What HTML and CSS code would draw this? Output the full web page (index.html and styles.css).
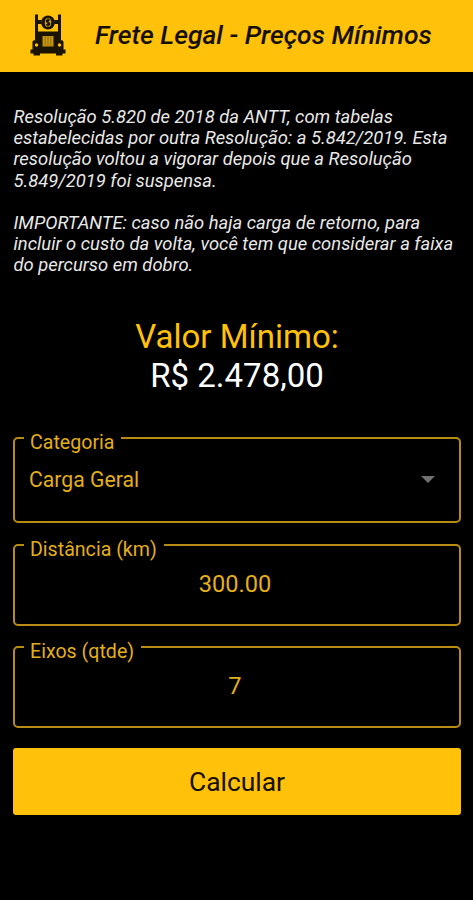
FILE: index.html
```html
<!DOCTYPE html>
<html lang="pt-BR">
<head>
  <meta charset="UTF-8">
  <meta name="viewport" content="width=device-width, initial-scale=1.0">
  <title>Frete Legal - Preços Mínimos</title>
  <link rel="stylesheet" href="styles.css">
</head>
<body>
  <header>
    <svg class="logo" viewBox="0 0 36 42" width="36" height="42">
      <!-- exhaust pipes and cab -->
      <path d="M5 .5h3v26H5zM28 .5h3v26h-3z"/>
      <path d="M8 6h3.500v4H8zM24.500 6H28v4h-3.500z"/>
      <path d="M7 17.500h22V21H7z"/>
      <circle cx="18" cy="8.500" r="6.900"/>
      <ellipse class="coin" cx="18" cy="8.500" rx="3.200" ry="4.600"/>
      <path class="sign" d="M19.600 6.500c-.8-1-3.200-.8-3.200.6 0 1.700 3.300 1 3.300 2.900 0 1.500-2.700 1.500-3.500.4M18 4.500v8"/>
      <!-- bonnet, bumper and wheels -->
      <path d="M2.500 28q0-1.800 1.800-1.800h2.200L7.500 20.500h21l1 5.700h2.200q1.800 0 1.800 1.800v8h-31z"/>
      <path d="M.5 35.500h35v4H.5zM3.500 38.500H10v3H3.500zM26 38.500h6.500v3H26z"/>
      <path class="grille" d="M12.500 22h11v10.500h-11z"/>
      <path class="bars" d="M15.200 22v10.500M18 22v10.500M20.800 22v10.500"/>
      <circle class="lamp" cx="6.500" cy="31" r="1.700"/>
      <circle class="lamp" cx="29.500" cy="31" r="1.700"/>
    </svg>
    <h1>Frete Legal - Preços Mínimos</h1>
  </header>

  <main>
    <div class="notice">
      <p>Resolução 5.820 de 2018 da ANTT, com tabelas<br>
      estabelecidas por outra Resolução: a 5.842/2019. Esta<br>
      resolução voltou a vigorar depois que a Resolução<br>
      5.849/2019 foi suspensa.</p>
      <p>IMPORTANTE: caso não haja carga de retorno, para<br>
      incluir o custo da volta, você tem que considerar a faixa<br>
      do percurso em dobro.</p>
    </div>

    <div class="result">
      <div class="result-label">Valor Mínimo:</div>
      <div class="result-value">R$ 2.478,00</div>
    </div>

    <form>
      <fieldset class="field category">
        <legend>Categoria</legend>
        <div class="select">
          <span>Carga Geral</span>
          <svg class="arrow" viewBox="0 0 14 7" width="14" height="7"><path d="M0 0h14L7 7z"/></svg>
        </div>
      </fieldset>
      <fieldset class="field">
        <legend>Distância (km)</legend>
        <input type="text" value="300.00">
      </fieldset>
      <fieldset class="field">
        <legend>Eixos (qtde)</legend>
        <input type="text" value="7">
      </fieldset>
      <button type="button" class="submit">Calcular</button>
    </form>
  </main>
</body>
</html>
```

FILE: styles.css
```css
* {
  box-sizing: border-box;
}
body {
  margin: 0;
  min-height: 100vh;
  font-family: Roboto, sans-serif;
  background: #000;
  color: #fff;
}
header {
  display: flex;
  align-items: center;
  height: 72px;
  padding: 0 30px 2px;
  background: #ffc109;
  color: #151000;
}
.logo {
  flex: none;
  fill: #191300;
}
.logo .coin {
  fill: #d9a50d;
}
.logo .sign {
  fill: none;
  stroke: #191300;
  stroke-width: 1.5;
}
.logo .grille {
  fill: #c39512;
}
.logo .bars {
  stroke: #8d6c0d;
  stroke-width: 0.7;
}
.logo .lamp {
  fill: #ffc109;
}
h1 {
  margin: 0 0 0 29px;
  padding-bottom: 2px;
  font-size: 26.5px;
  font-style: italic;
  font-weight: 500;
  white-space: nowrap;
}
main {
  padding: 34px 12px 0 13px;
}
.notice {
  padding-left: 0.5px;
  font-size: 18.4px;
  font-style: italic;
  line-height: 21.2px;
  color: #e8e8e8;
  white-space: nowrap;
}
.notice p {
  margin: 0 0 21.2px;
}
.result {
  height: 127px;
  padding-top: 20px;
  text-align: center;
  font-size: 33px;
  line-height: 39px;
}
.result-label {
  color: #ffc109;
}
form {
  display: flex;
  flex-direction: column;
}
.field {
  height: 95px;
  min-width: 0;
  margin: 0 0 7px;
  padding: 0 14px;
  border: 2px solid #b88b14;
  border-radius: 5px;
  color: #e3ae1c;
}
.category {
  height: 99px;
  margin-bottom: 8px;
}
legend {
  margin-left: -5px;
  padding: 9px 7px 0 6px;
  font-size: 19.6px;
  line-height: 19px;
}
.select {
  display: flex;
  align-items: center;
  justify-content: space-between;
  padding: 13px 10px 0 0;
  font-size: 21.2px;
  line-height: 30px;
}
.arrow {
  fill: #707070;
}
.field input {
  display: block;
  width: 100%;
  height: 30px;
  margin-top: 10px;
  padding: 0 4px 0 0;
  border: none;
  outline: none;
  background: none;
  color: inherit;
  font: 23.6px Roboto, sans-serif;
  text-align: center;
}
.submit {
  height: 67px;
  margin-top: 13px;
  padding-bottom: 0;
  border: none;
  border-radius: 3px;
  background: #ffc109;
  color: #151000;
  font: 26.4px Roboto, sans-serif;
}
```
